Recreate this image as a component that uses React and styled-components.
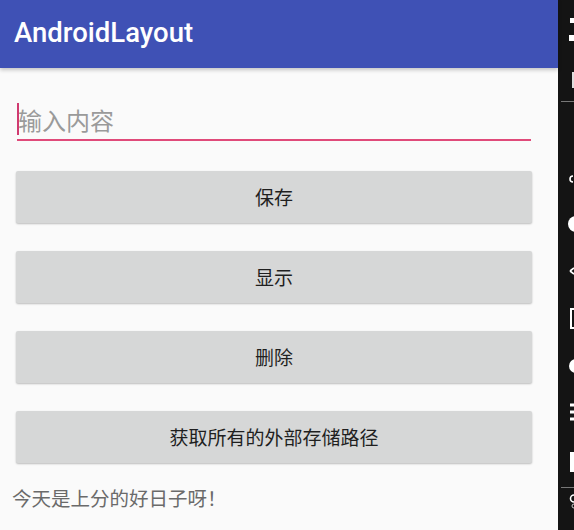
import React from 'react';
import styled, { createGlobalStyle } from 'styled-components';

const GlobalStyle = createGlobalStyle`
  html, body {
    margin: 0;
    padding: 0;
    background: #fafafa;
    overflow: hidden;
  }
`;

const Screen = styled.div`
  display: flex;
  width: 574px;
  height: 530px;
  overflow: hidden;
`;

const Phone = styled.div`
  flex: 0 0 558px;
  display: flex;
  flex-direction: column;
  background: #fafafa;
`;

const AppBar = styled.header`
  flex: 0 0 68px;
  display: flex;
  align-items: center;
  padding-left: 14px;
  padding-bottom: 4px;
  box-sizing: border-box;
  background: #3f51b5;
  box-shadow: 0 2px 4px rgba(0, 0, 0, 0.22);
  position: relative;
  z-index: 1;
`;

const Title = styled.h1`
  margin: 0;
  font-family: Roboto, "Noto Sans", sans-serif;
  font-weight: 500;
  font-size: 27.5px;
  color: #ffffff;
`;

const Content = styled.main`
  display: flex;
  flex-direction: column;
  padding: 35px 26px 0 16px;
`;

const Field = styled.div`
  position: relative;
  margin: 0 1px;
  height: 36px;
  border-bottom: 2px solid #e04a7a;
  display: flex;
  align-items: center;
`;

const Cursor = styled.span`
  position: absolute;
  left: 0;
  top: 0;
  width: 2px;
  height: 32px;
  background: #d03a70;
`;

const Placeholder = styled.span`
  padding-left: 1px;
  margin-top: -3px;
  font-family: "Noto Sans CJK SC", "Noto Sans", sans-serif;
  font-size: 24px;
  color: #9a9a9a;
`;

const Buttons = styled.div`
  display: flex;
  flex-direction: column;
  gap: 28px;
  margin-top: 30px;
`;

const Button = styled.button`
  height: 52px;
  border: none;
  border-radius: 2px;
  background: #d6d7d7;
  box-shadow: 0 1px 2px rgba(0, 0, 0, 0.25);
  font-family: "Noto Sans CJK SC", "Noto Sans", sans-serif;
  font-size: 19px;
  color: #1f1f1f;
  padding: 0 0 2px;
  cursor: pointer;
`;

const Message = styled.p`
  margin: 20px 0 0 -4px;
  font-family: "Noto Sans CJK SC", "Noto Sans", sans-serif;
  font-size: 19.5px;
  color: #6a6a6a;
`;

const SideBar = styled.aside`
  flex: 1;
  background: #141414;
`;

function ToolStrip() {
  return (
    <svg width="16" height="530" viewBox="0 0 16 530">
      <rect x="12" y="18" width="4" height="5" fill="#fff" />
      <rect x="11" y="35" width="5" height="6" fill="#fff" />
      <rect x="14" y="72" width="2" height="16" fill="#ddd" />
      <rect x="3" y="101" width="13" height="1" fill="#777" />
      <path d="M15 176 a3 3 0 1 0 0 6" stroke="#fff" strokeWidth="1.6" fill="none" />
      <circle cx="18" cy="224" r="8" fill="#fff" />
      <path d="M12 271 l4 -3 M12 271 l4 3" stroke="#fff" strokeWidth="1.6" />
      <rect x="13" y="309" width="5" height="19" stroke="#fff" strokeWidth="2" fill="none" />
      <circle cx="18" cy="366" r="7" fill="#fff" />
      <path d="M12 405 h4 M12 412 h4 M12 419 h4" stroke="#fff" strokeWidth="3" />
      <rect x="12" y="452" width="4" height="20" fill="#fff" />
      <rect x="3" y="487" width="13" height="1" fill="#777" />
      <path d="M16 495 a3.5 3.5 0 1 0 0 7" stroke="#fff" strokeWidth="1.6" fill="none" />
      <path d="M16 504 a2 2 0 1 0 0 4" stroke="#ccc" strokeWidth="1" fill="none" />
    </svg>
  );
}

const actions = ['保存', '显示', '删除', '获取所有的外部存储路径'];

export default function App() {
  return (
    <>
      <GlobalStyle />
      <Screen>
        <Phone>
          <AppBar>
            <Title>AndroidLayout</Title>
          </AppBar>
          <Content>
            <Field>
              <Cursor />
              <Placeholder>输入内容</Placeholder>
            </Field>
            <Buttons>
              {actions.map(label => (
                <Button key={label}>{label}</Button>
              ))}
            </Buttons>
            <Message>今天是上分的好日子呀！</Message>
          </Content>
        </Phone>
        <SideBar>
          <ToolStrip />
        </SideBar>
      </Screen>
    </>
  );
}
